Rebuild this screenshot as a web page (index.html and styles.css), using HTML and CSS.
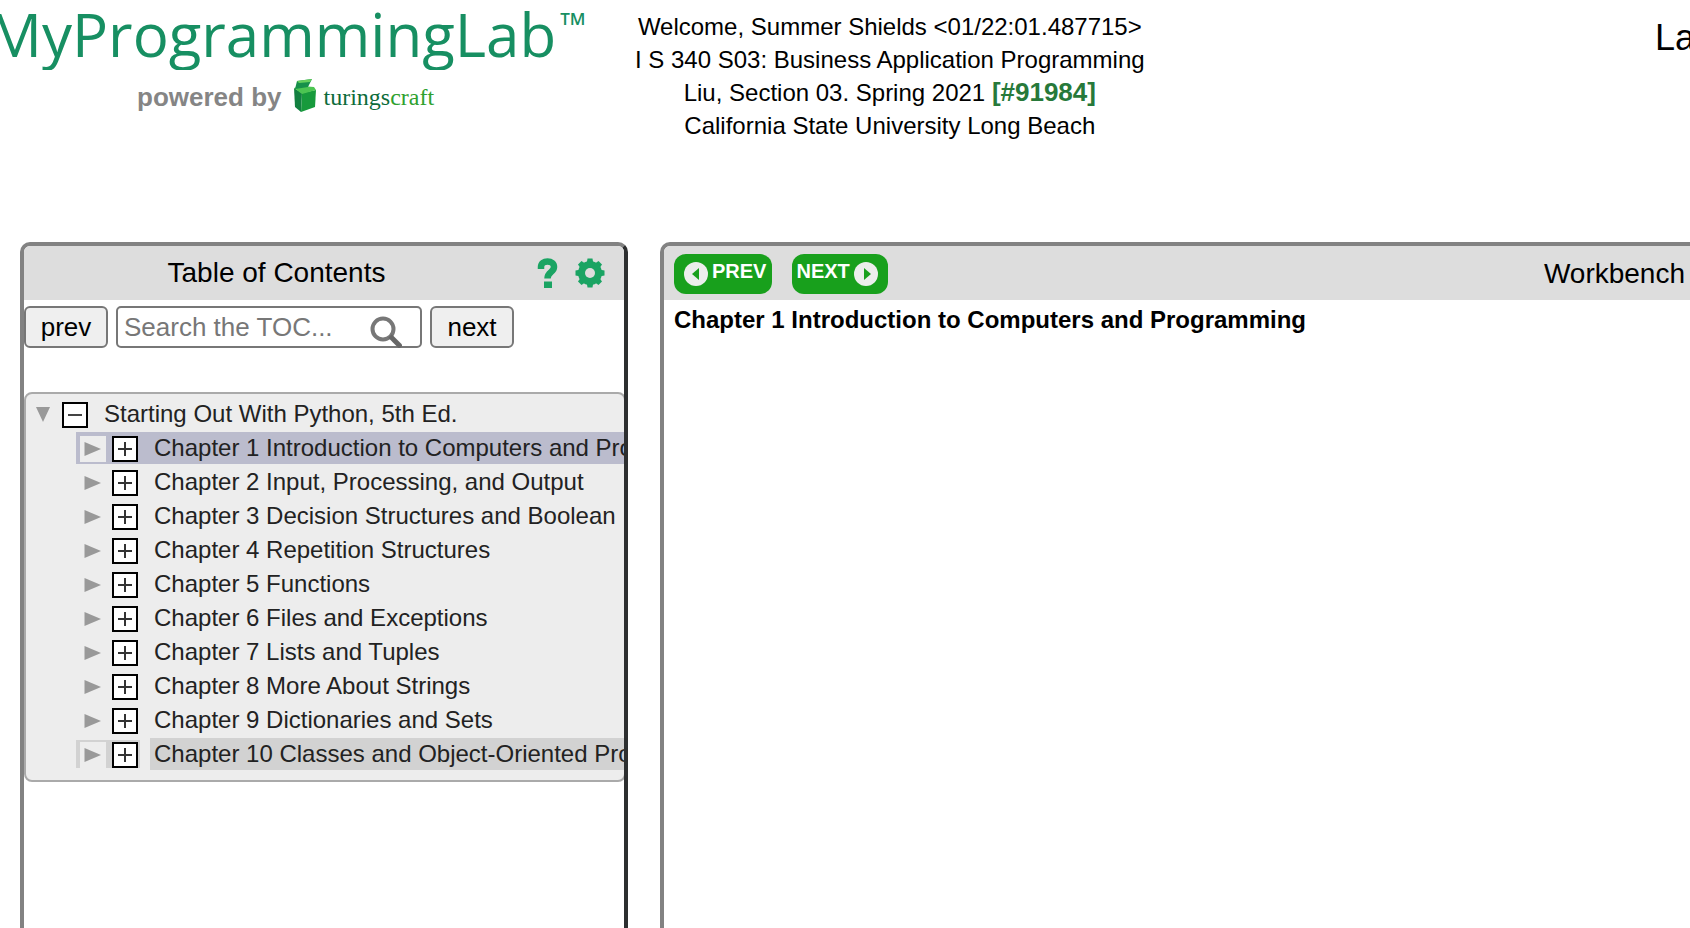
FILE: index.html
```html
<!DOCTYPE html>
<html lang="en">
<head>
<meta charset="utf-8">
<title>MyProgrammingLab</title>
<link rel="stylesheet" href="styles.css">
</head>
<body>
<svg class="defs" aria-hidden="true">
  <defs>
    <symbol id="plus" viewBox="0 0 26 26"><rect x="1" y="1" width="24" height="24" fill="#fff" stroke="#000" stroke-width="2"/><path d="M6 13h14M13 6v14" stroke="#333" stroke-width="2"/></symbol>
    <symbol id="minus" viewBox="0 0 26 26"><rect x="1" y="1" width="24" height="24" fill="#fff" stroke="#000" stroke-width="2"/><path d="M6 13h14" stroke="#444" stroke-width="2"/></symbol>
    <symbol id="right" viewBox="0 0 26 26"><path d="M4.500 6L21 13L4.500 20z" fill="#999"/></symbol>
    <symbol id="down" viewBox="0 0 26 26"><path d="M6 5H20L13 20z" fill="#999"/></symbol>
  </defs>
</svg>
<header class="top">
  <div class="brand">
    <div class="logo">MyProgrammingLab<span class="tm">TM</span></div>
    <div class="powered">
      <span class="by">powered by</span>
      <svg class="box" viewBox="0 0 24 34" aria-hidden="true">
        <path d="M1 9L9 14L8 33L2 28z" fill="#128040"/>
        <path d="M9 14L23 11L22 28L8 33z" fill="#179a3c"/>
        <path d="M1 9L8 7L21 8L23 11L9 15z" fill="#4cc552"/>
        <path d="M4 2L19 0L15 8L2 10z" fill="#16904a"/>
        <path d="M4 2L19 0L17 3L6 4z" fill="#66d05c"/>
      </svg>
      <span class="turing">turings<span class="craft">craft</span></span>
    </div>
  </div>
  <div class="course">
    <div>Welcome, Summer Shields &lt;01/22:01.487715&gt;</div>
    <div>I S 340 S03: Business Application Programming</div>
    <div>Liu, Section 03. Spring 2021 <b class="num">[#91984]</b></div>
    <div>California State University Long Beach</div>
  </div>
  <div class="lab">La</div>
</header>
<main class="panels">
  <section class="panel toc">
    <div class="bar">
      <h2 class="title">Table of Contents</h2>
      <button class="tool" aria-label="Help"><svg width="22" height="30" viewBox="0 0 22 30"><path d="M4 11V9C4 5 7 3.500 10.500 3.500C14.500 3.500 17 5.500 17 9C17 14.500 10.500 13.500 10.500 20.500" fill="none" stroke="#1aa463" stroke-width="6.500"/><path d="M7 23.500h8V30H7z" fill="#1aa463"/></svg></button>
      <button class="tool" aria-label="Settings"><svg width="30" height="30" viewBox="-15 -15 30 30"><g fill="#1aa463"><path id="t" d="M-3.500 -9L-2.500 -14.500H2.500L3.500 -9V9L2.500 14.500H-2.500L-3.500 9z"/><use href="#t" transform="rotate(45)"/><use href="#t" transform="rotate(90)"/><use href="#t" transform="rotate(135)"/><circle r="12"/></g><circle r="5" fill="#ddd"/></svg></button>
    </div>
    <form class="search">
      <button type="button" class="btn">prev</button>
      <span class="field">
        <input type="text" aria-label="Search the TOC" placeholder="Search the TOC...">
        <svg class="lens" viewBox="0 0 32 32" aria-hidden="true"><circle cx="13" cy="13" r="10.500" fill="none" stroke="#777" stroke-width="4"/><path d="M20 20L31 31" stroke="#666" stroke-width="5"/></svg>
      </span>
      <button type="button" class="btn">next</button>
    </form>
    <div class="tree">
      <div class="row root"><span class="icons"><svg><use href="#down"/></svg><svg><use href="#minus"/></svg></span><span class="label">Starting Out With Python, 5th Ed.</span></div>
      <div class="row selected"><span class="icons"><svg><use href="#right"/></svg><svg><use href="#plus"/></svg></span><span class="label">Chapter 1 Introduction to Computers and Programming</span></div>
      <div class="row"><span class="icons"><svg><use href="#right"/></svg><svg><use href="#plus"/></svg></span><span class="label">Chapter 2 Input, Processing, and Output</span></div>
      <div class="row"><span class="icons"><svg><use href="#right"/></svg><svg><use href="#plus"/></svg></span><span class="label">Chapter 3 Decision Structures and Boolean</span></div>
      <div class="row"><span class="icons"><svg><use href="#right"/></svg><svg><use href="#plus"/></svg></span><span class="label">Chapter 4 Repetition Structures</span></div>
      <div class="row"><span class="icons"><svg><use href="#right"/></svg><svg><use href="#plus"/></svg></span><span class="label">Chapter 5 Functions</span></div>
      <div class="row"><span class="icons"><svg><use href="#right"/></svg><svg><use href="#plus"/></svg></span><span class="label">Chapter 6 Files and Exceptions</span></div>
      <div class="row"><span class="icons"><svg><use href="#right"/></svg><svg><use href="#plus"/></svg></span><span class="label">Chapter 7 Lists and Tuples</span></div>
      <div class="row"><span class="icons"><svg><use href="#right"/></svg><svg><use href="#plus"/></svg></span><span class="label">Chapter 8 More About Strings</span></div>
      <div class="row"><span class="icons"><svg><use href="#right"/></svg><svg><use href="#plus"/></svg></span><span class="label">Chapter 9 Dictionaries and Sets</span></div>
      <div class="row hover"><span class="icons"><svg><use href="#right"/></svg><svg><use href="#plus"/></svg></span><span class="label">Chapter 10 Classes and Object-Oriented Programming</span></div>
    </div>
  </section>
  <section class="panel bench">
    <div class="bar">
      <button class="nav"><svg viewBox="0 0 24 24"><circle cx="12" cy="12" r="12" fill="#eceeec"/><path d="M15 6v12L8 12z" fill="#18a01c"/></svg><span>PREV</span></button>
      <button class="nav"><span>NEXT</span><svg viewBox="0 0 24 24"><circle cx="12" cy="12" r="12" fill="#eceeec"/><path d="M10 6v12L17 12z" fill="#18a01c"/></svg></button>
      <h2 class="title">Workbench</h2>
    </div>
    <h1 class="chapter">Chapter 1 Introduction to Computers and Programming</h1>
  </section>
</main>
</body>
</html>
```
FILE: styles.css
```css
* { box-sizing: border-box; }
body {
  margin: 0;
  min-height: 100vh;
  display: flex;
  flex-direction: column;
  overflow: hidden;
  background: #fff;
  color: #000;
  font-family: "Liberation Sans", Arial, sans-serif;
  font-size: 24px;
}
.defs { position: absolute; width: 0; height: 0; }
button, input { font-family: inherit; }
h1, h2 { margin: 0; }

.top { display: flex; min-height: 242px; }
.brand { flex: 0 0 635px; }
.logo {
  height: 70px;
  margin-left: -12px;
  overflow: hidden;
  white-space: nowrap;
  font-family: "Open Sans", sans-serif;
  font-size: 60px;
  line-height: 68px;
  color: #178f62;
}
.tm { margin-left: 4px; font-size: 17px; font-weight: 600; vertical-align: 32px; line-height: 1; }
.powered { display: flex; align-items: center; padding-left: 137px; height: 54px; }
.by { font-size: 26px; font-weight: bold; color: #858585; }
.box { width: 24px; height: 34px; margin: 0 6px 2px 12px; }
.turing { font-family: "Liberation Serif", serif; font-size: 24px; color: #0c6b3a; }
.craft { color: #2fa12f; }
.course { padding-top: 10px; text-align: center; line-height: 33px; white-space: nowrap; }
.num { font-size: 26px; line-height: 1; color: #27793a; }
.lab { flex: 1; padding-top: 17px; margin-right: -5px; text-align: right; font-size: 36px; line-height: 42px; }

.panels { flex: 1; display: flex; gap: 32px; padding-left: 20px; }
.panel { border: 4px solid #828282; border-bottom: 0; min-width: 0; overflow: hidden; }
.toc { flex: 0 0 608px; border-right-color: #2d2f30; border-radius: 10px 10px 0 0; }
.bench { flex: 1; border-right: 0; border-radius: 10px 0 0 0; }
.bar { display: flex; align-items: center; height: 54px; background: #ddd; }
.title { flex: 1; font-size: 28px; font-weight: normal; line-height: 32px; text-align: right; }
.toc .bar { padding-right: 19px; }
.toc .title { padding-left: 8px; text-align: center; }
.bench .bar { padding: 2px 5px 0 10px; gap: 20px; }
.tool { display: flex; padding: 0; border: 0; background: none; margin-left: 16px; }
.nav {
  display: flex;
  align-items: center;
  gap: 4px;
  height: 40px;
  padding: 0 6px 0 10px;
  border: 0;
  border-radius: 12px;
  background: #18a01c;
  color: #fff;
  font-size: 20px;
  font-weight: bold;
}
.nav + .nav { padding: 0 10px 0 4px; }
.nav svg { width: 24px; height: 24px; }
.nav span { padding-bottom: 6px; }

.search { display: flex; gap: 8px; padding-top: 6px; margin-bottom: 44px; }
.btn {
  min-width: 84px;
  height: 42px;
  padding: 0 14px;
  border: 2px solid #777;
  border-radius: 6px;
  background: #efefef;
  color: #000;
  font-size: 26px;
}
.field { position: relative; width: 306px; }
.field input {
  display: block;
  width: 100%;
  height: 42px;
  padding: 0 6px;
  border: 2px solid #777;
  border-radius: 5px;
  font-size: 26px;
}
.field input::placeholder { color: #777; opacity: 1; }
.lens { position: absolute; right: 20px; top: 10px; width: 32px; height: 32px; }

.tree {
  margin-right: -2px;
  padding: 4px 0 8px;
  border: 2px solid #aaa;
  border-radius: 8px;
  background: #ededed;
  color: #222;
}
.row {
  display: flex;
  height: 32px;
  margin: 0 0 2px 50px;
  line-height: 32px;
  white-space: nowrap;
}
.root { margin-left: 0; }
.icons { display: flex; gap: 6px; padding: 4px 2px 2px 4px; }
.icons svg { width: 26px; height: 26px; }
.label { flex: 1; margin-left: 10px; padding-left: 4px; overflow: hidden; }
.selected { background: #bbbccd; }
.selected svg:first-child, .hover svg:first-child { background: #ededed; }
.hover .icons { height: 28px; margin-top: 2px; padding-top: 2px; padding-bottom: 0; background: #d2d2d2; }
.hover .label { background: #d2d2d2; }

.chapter { padding: 6px 10px; font-size: 24px; line-height: 28px; }
```
